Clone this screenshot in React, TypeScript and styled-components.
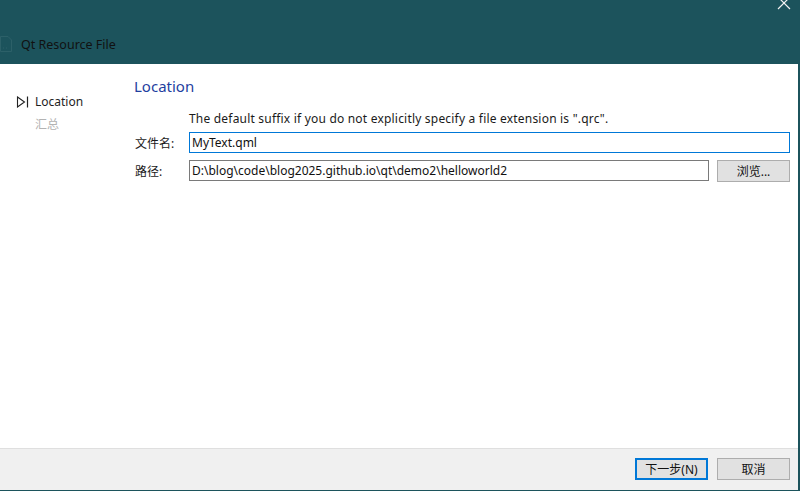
import * as React from 'react'
import styled, { createGlobalStyle } from 'styled-components'

const GlobalStyle = createGlobalStyle`
  html, body {
    margin: 0;
    padding: 0;
    background: #1c535c;
  }
  body {
    font-family: "Noto Sans", "Noto Sans CJK SC", sans-serif;
    font-size: 12px;
    color: #1a1a1a;
  }
`

const Window = styled.div`
  width: 800px;
  height: 491px;
  display: flex;
  flex-direction: column;
  overflow: hidden;
  background: #1c535c;
`

const TitleBar = styled.div`
  position: relative;
  height: 64px;
  flex: none;
  display: flex;
  align-items: flex-end;
`

const TitleRow = styled.div`
  display: flex;
  align-items: center;
  gap: 9px;
  height: 34px;
  padding-bottom: 6px;
  box-sizing: border-box;
`

const TitleText = styled.span`
  font-size: 12.5px;
  color: #111;
`

const CloseButton = styled.div`
  position: absolute;
  top: -4px;
  right: 8px;
  width: 16px;
  height: 14px;
`

const Body = styled.div`
  flex: 1;
  display: flex;
  background: #fff;
  margin-right: 2px;
`

const Sidebar = styled.div`
  width: 134px;
  flex: none;
  padding-top: 29px;
  display: flex;
  flex-direction: column;
  gap: 5px;
`

const NavItem = styled.div<{ active?: boolean }>`
  display: flex;
  align-items: center;
  height: 17px;
  padding-left: 35px;
  position: relative;
  color: ${({ active }) => (active ? '#1e1e1e' : '#b3b3b3')};
`

const NavMarker = styled.svg`
  position: absolute;
  left: 16px;
  top: 3px;
`

const Main = styled.div`
  flex: 1;
  display: flex;
  flex-direction: column;
  padding-top: 12px;
  padding-right: 8px;
`

const Heading = styled.div`
  height: 20px;
  line-height: 20px;
  font-size: 15px;
  color: #1f3f9f;
`

const Hint = styled.div`
  margin-top: 14px;
  margin-left: 55px;
  height: 17px;
  line-height: 17px;
  letter-spacing: 0.2px;
`

const FormRow = styled.div<{ gapAbove: number }>`
  display: flex;
  align-items: center;
  gap: 8px;
  height: 21px;
  margin-top: ${({ gapAbove }) => gapAbove}px;
`

const Label = styled.span`
  width: 47px;
  flex: none;
  padding-left: 1px;
  box-sizing: border-box;
`

const Field = styled.div<{ focused?: boolean }>`
  flex: 1;
  height: 21px;
  box-sizing: border-box;
  border: 1px solid ${({ focused }) => (focused ? '#0078d7' : '#7a7a7a')};
  display: flex;
  align-items: center;
  padding-left: 2px;
  color: #111;
  white-space: nowrap;
  overflow: hidden;
`

const Button = styled.div<{ primary?: boolean }>`
  width: 73px;
  height: 22px;
  box-sizing: border-box;
  flex: none;
  background: #e1e1e1;
  border: ${({ primary }) => (primary ? '2px solid #0078d7' : '1px solid #adadad')};
  display: flex;
  align-items: center;
  justify-content: center;
  color: #111;
`

const Footer = styled.div`
  height: 42px;
  flex: none;
  box-sizing: border-box;
  background: #f0f0f0;
  border-top: 1px solid #dfdfdf;
  margin-right: 2px;
  display: flex;
  align-items: center;
  justify-content: flex-end;
  gap: 9px;
  padding-right: 8px;
  padding-bottom: 1px;
  margin-bottom: 1px;
`

export default function App() {
  return (
    <>
      <GlobalStyle />
      <Window>
        <TitleBar>
          <TitleRow>
            <svg width="12" height="16" viewBox="0 0 12 16">
              <path d="M0.5 0.5 H8 L11.5 4 V15.5 H0.5 Z" fill="none" stroke="#2c6068" />
              <path d="M3 12 H4 M6 12 H7" stroke="#2c6068" />
            </svg>
            <TitleText>Qt Resource File</TitleText>
          </TitleRow>
          <CloseButton>
            <svg width="16" height="14" viewBox="0 0 16 14">
              <path d="M2 1 L14 13 M14 1 L2 13" stroke="#f2f2f2" strokeWidth="1.2" />
            </svg>
          </CloseButton>
        </TitleBar>
        <Body>
          <Sidebar>
            <NavItem active>
              <NavMarker width="13" height="12" viewBox="0 0 13 12">
                <path d="M1.5 1 L8.5 6 L1.5 11 Z" fill="none" stroke="#222" strokeWidth="1.1" />
                <path d="M11.5 0.5 V11.5" stroke="#222" strokeWidth="1.2" />
              </NavMarker>
              Location
            </NavItem>
            <NavItem>汇总</NavItem>
          </Sidebar>
          <Main>
            <Heading>Location</Heading>
            <Hint>The default suffix if you do not explicitly specify a file extension is ".qrc".</Hint>
            <FormRow gapAbove={5}>
              <Label>文件名:</Label>
              <Field focused>MyText.qml</Field>
            </FormRow>
            <FormRow gapAbove={7}>
              <Label>路径:</Label>
              <Field>D:\blog\code\blog2025.github.io\qt\demo2\helloworld2</Field>
              <Button>浏览...</Button>
            </FormRow>
          </Main>
        </Body>
        <Footer>
          <Button primary>下一步(N)</Button>
          <Button>取消</Button>
        </Footer>
      </Window>
    </>
  )
}
